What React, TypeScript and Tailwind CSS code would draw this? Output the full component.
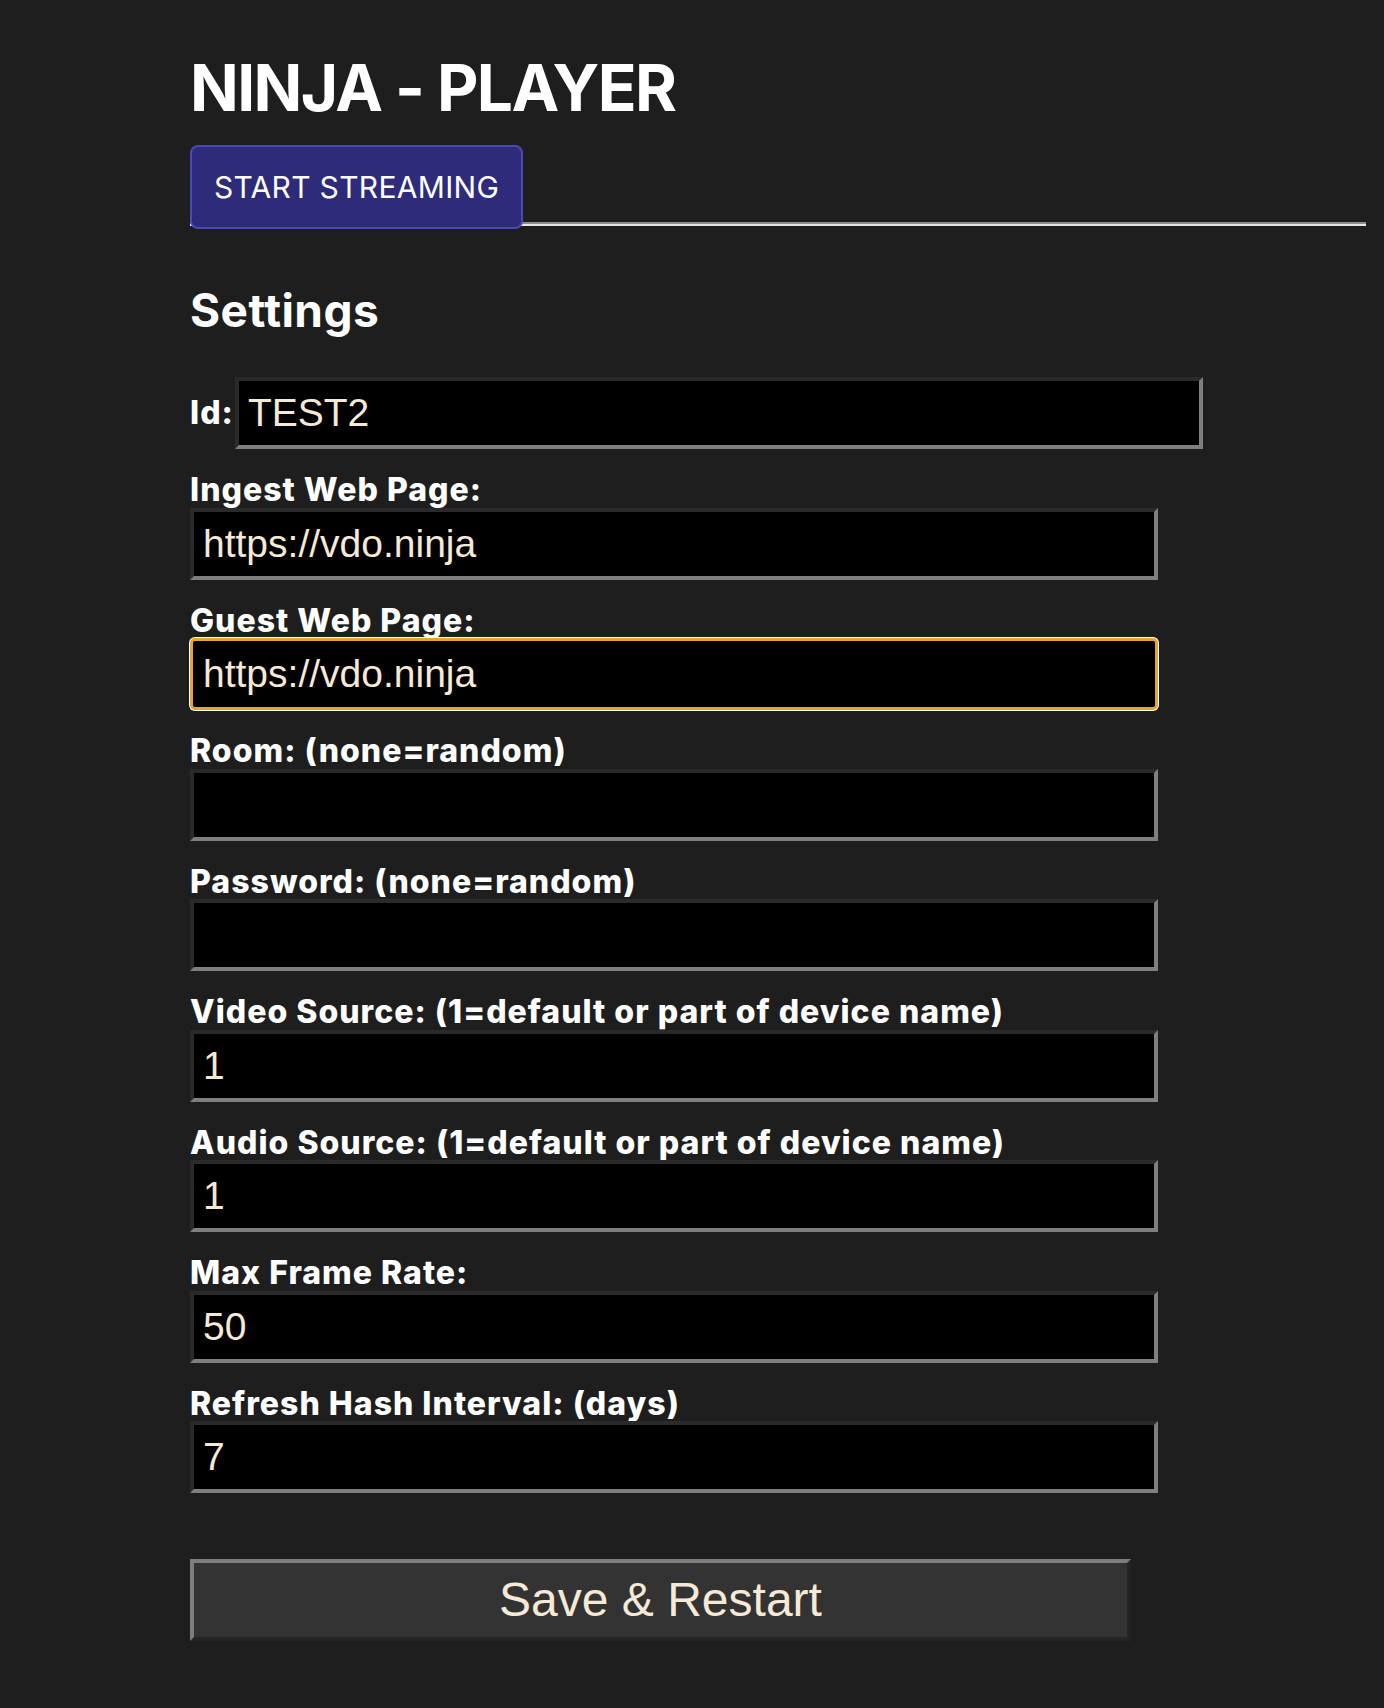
import React from 'react';

type Field = {
    label: string;
    value: string;
    focused?: boolean;
};

const fields: Field[] = [
    { label: 'Ingest Web Page:', value: 'https://vdo.ninja' },
    { label: 'Guest Web Page:', value: 'https://vdo.ninja', focused: true },
    { label: 'Room: (none=random)', value: '' },
    { label: 'Password: (none=random)', value: '' },
    { label: 'Video Source: (1=default or part of device name)', value: '1' },
    { label: 'Audio Source: (1=default or part of device name)', value: '1' },
    { label: 'Max Frame Rate:', value: '50' },
    { label: 'Refresh Hash Interval: (days)', value: '7' },
];

const inputBase =
    "h-[72px] w-[968px] bg-black px-[9px] text-[39px] text-[#f6e9d6] font-['Liberation_Sans',Arial,sans-serif] outline-none";
const inputInset =
    'border-4 border-t-[#2a2a2a] border-l-[#2a2a2a] border-b-[#7f7f7f] border-r-[#7f7f7f]';
const inputFocused =
    'border-[3px] border-[#e6a436] rounded-[5px] shadow-[0_0_0_1px_#ffffff] pl-[10px]';

const labelText = 'text-[32px] font-extrabold tracking-[0.032em]';

const App: React.FC = () => {
    return (
        <div className="min-h-screen bg-[#1e1e1e] pl-[190px] pr-[18px] pt-[49px] pb-[66px] font-['Inter',sans-serif] text-white">
            <h1 className="text-[64px] font-bold leading-[77px] tracking-[-0.025em]">NINJA - PLAYER</h1>

            <div className="mt-[19px]">
                <button className="relative z-10 flex h-[84px] w-[333px] items-center justify-center rounded-[8px] border-2 border-[#4c47b8] bg-[#2e2b7a] text-[30px] tracking-[0.01em] text-white">
                    START STREAMING
                </button>
                <div className="-mt-[7px] h-[4px] border-t-2 border-[#8e8e8e] bg-[#e6e6e6]" />
            </div>

            <h2 className="mt-[56px] text-[46px] font-bold leading-[56px] tracking-[0.01em]">Settings</h2>

            <div className="mt-[39px] flex items-center gap-[1px]">
                <label className={`${labelText} leading-[36px]`}>Id:</label>
                <input className={`${inputBase} ${inputInset}`} defaultValue="TEST2" />
            </div>

            {fields.map((f) => (
                <div key={f.label} className="mt-[23px]">
                    <label className={`block ${labelText} leading-[35.5px]`}>{f.label}</label>
                    <input
                        className={`${inputBase} ${f.focused ? inputFocused : inputInset}`}
                        defaultValue={f.value}
                    />
                </div>
            ))}

            <button className="mt-[66px] h-[82px] w-[941px] border-4 border-t-[#7d7d7d] border-l-[#7d7d7d] border-b-[#242424] border-r-[#242424] bg-[#333333] text-[48px] text-[#f6e9d6] font-['Liberation_Sans',Arial,sans-serif]">
                Save &amp; Restart
            </button>
        </div>
    );
};

export default App;
